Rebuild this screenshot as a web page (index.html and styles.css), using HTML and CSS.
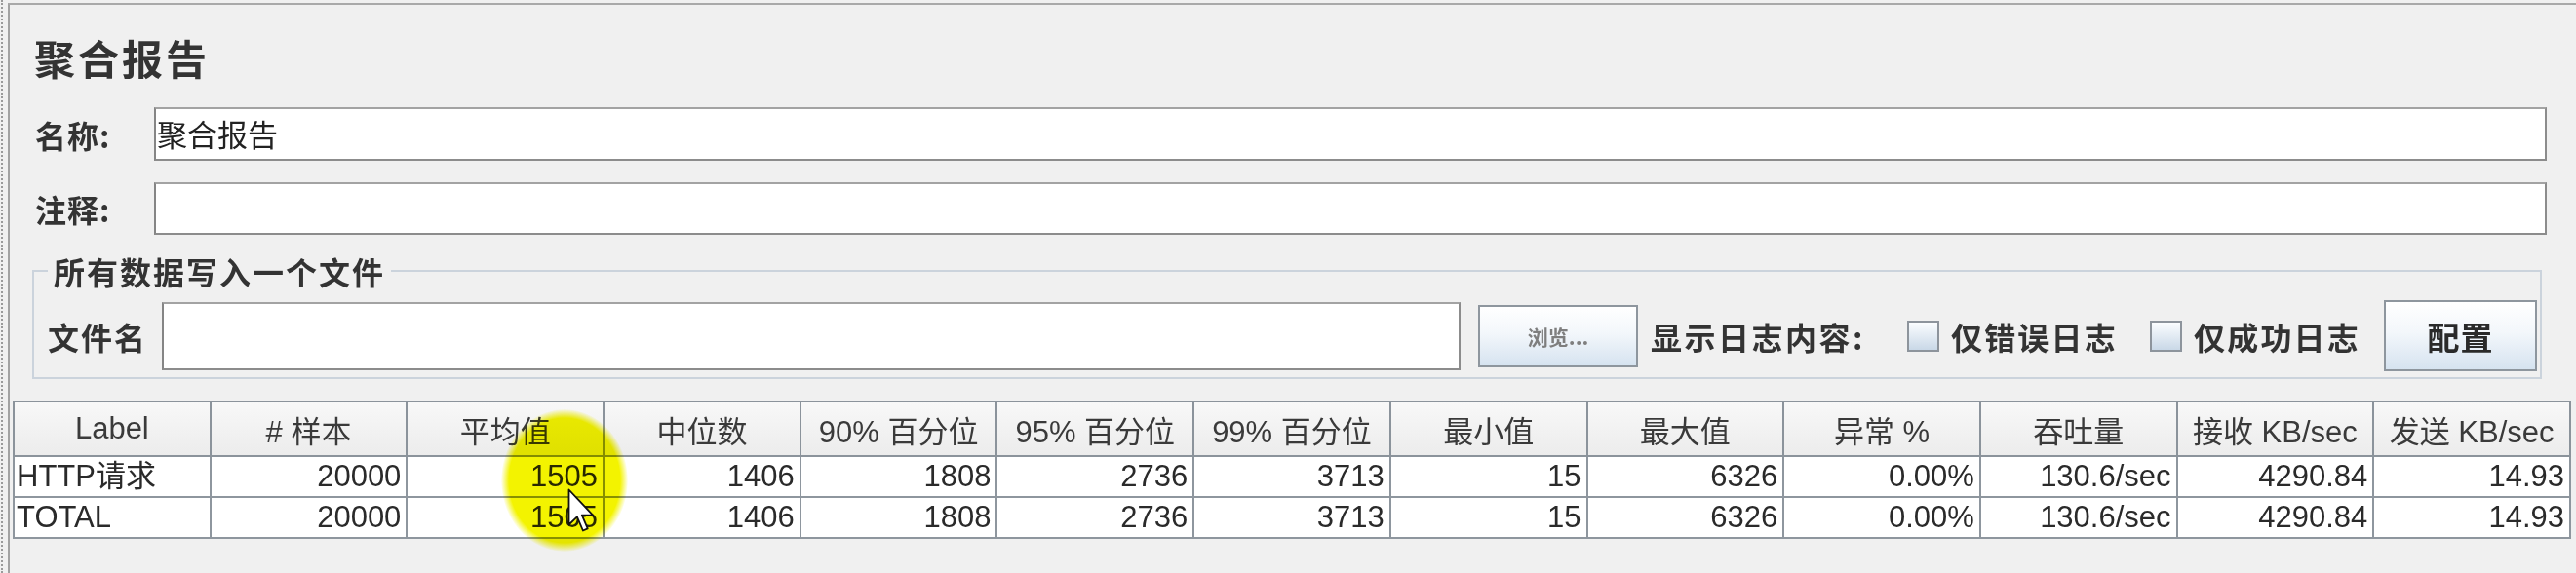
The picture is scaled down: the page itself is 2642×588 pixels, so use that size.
FILE: index.html
```html
<!DOCTYPE html>
<html lang="zh-CN">
<head>
<meta charset="utf-8">
<title>聚合报告</title>
<link rel="stylesheet" href="styles.css">
</head>
<body>
<div class="screen">
  <div class="edge"></div>
  <div class="panel">
    <div class="form">
      <h1 class="title">聚合报告</h1>
      <div class="field">
        <span class="lbl">名称:</span>
        <div class="input">聚合报告</div>
      </div>
      <div class="field field-comment">
        <span class="lbl">注释:</span>
        <div class="input"></div>
      </div>
      <fieldset class="group">
        <legend>所有数据写入一个文件</legend>
        <div class="file-row">
          <span class="file-lbl">文件名</span>
          <div class="input file-input"></div>
          <button class="btn browse">浏览...</button>
          <span class="log-lbl">显示日志内容:</span>
          <span class="check"></span>
          <span class="check-lbl">仅错误日志</span>
          <span class="check check-second"></span>
          <span class="check-lbl">仅成功日志</span>
          <button class="btn config">配置</button>
        </div>
      </fieldset>
    </div>
    <table class="report">
      <thead>
        <tr>
          <th>Label</th><th># 样本</th><th>平均值</th><th>中位数</th><th>90% 百分位</th><th>95% 百分位</th><th>99% 百分位</th><th>最小值</th><th>最大值</th><th>异常 %</th><th>吞吐量</th><th>接收 KB/sec</th><th>发送 KB/sec</th>
        </tr>
      </thead>
      <tbody>
        <tr>
          <td class="name">HTTP请求</td><td>20000</td><td>1505</td><td>1406</td><td>1808</td><td>2736</td><td>3713</td><td>15</td><td>6326</td><td>0.00%</td><td>130.6/sec</td><td>4290.84</td><td>14.93</td>
        </tr>
        <tr>
          <td class="name">TOTAL</td><td>20000</td><td>1505</td><td>1406</td><td>1808</td><td>2736</td><td>3713</td><td>15</td><td>6326</td><td>0.00%</td><td>130.6/sec</td><td>4290.84</td><td>14.93</td>
        </tr>
      </tbody>
    </table>
  </div>
  <div class="highlight"></div>
  <svg class="cursor" viewBox="0 0 20 32" width="30" height="48" aria-hidden="true">
    <path d="M1 1 L1 25 L6.6 19.6 L10.6 29 L13.8 27.6 L9.9 18.4 L17.4 18.4 Z" fill="#ffffff" stroke="#111111" stroke-width="1.2" stroke-linejoin="round"/>
  </svg>
</div>
</body>
</html>
```
FILE: styles.css
```css
* { box-sizing: border-box; }

html, body {
  margin: 0;
  padding: 0;
  background: #f0f0f0;
}

body {
  width: 2642px;
  height: 588px;
  overflow: hidden;
  font-family: "Noto Sans CJK SC", "Liberation Sans", sans-serif;
  color: #2e2e2e;
}

.screen {
  position: relative;
  display: flex;
  width: 2642px;
  height: 588px;
}

.edge {
  width: 7px;
  flex: none;
  border-left: 2px dotted #9a9a9a;
  margin-left: 1px;
}

.panel {
  flex: 1;
  margin-top: 3px;
  border-top: 2px solid #a9a9a9;
  border-left: 2px solid #a2a2a2;
  min-width: 0;
}

.form {
  padding: 0 30px 0 23px;
}

.title {
  margin: 29px 0 0 2px;
  font-size: 42px;
  line-height: 50px;
  font-weight: 700;
  letter-spacing: 3px;
  color: #333;
}

.field {
  display: flex;
  align-items: center;
  height: 55px;
  margin-top: 26px;
}

.field-comment {
  margin-top: 22px;
  height: 54px;
}

.lbl {
  width: 125px;
  flex: none;
  padding-left: 3px;
  font-size: 32px;
  font-weight: 700;
  letter-spacing: 1px;
  color: #333;
}

.input {
  flex: 1;
  align-self: stretch;
  background: #fff;
  border: 2px solid #a3a3a3;
  border-left-color: #858585;
  border-bottom-color: #8c8c8c;
  border-right-color: #8c8c8c;
  font-size: 31px;
  line-height: 50px;
  padding-left: 1px;
  color: #222;
}

.group {
  margin: 17px 5px 0 0;
  padding: 10px 3px 6px 14px;
  border: 2px solid #cbd3dc;
  min-width: 0;
}

.group legend {
  padding: 0 6px;
  margin-left: 0;
  font-size: 32px;
  line-height: 40px;
  font-weight: 700;
  letter-spacing: 2px;
  color: #333;
}

.file-row {
  display: flex;
  align-items: center;
  height: 73px;
}

.file-lbl {
  width: 117px;
  flex: none;
  font-size: 32px;
  font-weight: 700;
  letter-spacing: 2px;
  color: #333;
}

.file-input {
  align-self: center;
  height: 70px;
}

.btn {
  flex: none;
  font-family: "Noto Sans CJK SC", sans-serif;
  background: linear-gradient(#ffffff 0%, #f3f7fb 45%, #d6e3f0 100%);
  border: 2px solid #8e969e;
  border-radius: 0;
  padding: 0;
  cursor: default;
}

.browse {
  margin-left: 18px;
  width: 164px;
  height: 64px;
  font-size: 21px;
  color: #7e7e7e;
  font-weight: 700;
}

.log-lbl {
  margin-left: 13px;
  font-size: 32px;
  font-weight: 700;
  letter-spacing: 2.5px;
  color: #333;
}

.check {
  flex: none;
  width: 33px;
  height: 32px;
  margin-left: 43px;
  border: 2px solid #8d949c;
  background: linear-gradient(#fbfdff, #c9d8e7);
}

.check-second {
  margin-left: 33px;
}

.check-lbl {
  margin-left: 12px;
  font-size: 32px;
  font-weight: 700;
  letter-spacing: 2.2px;
  color: #333;
}

.config {
  margin-left: 24px;
  width: 157px;
  height: 73px;
  font-size: 33px;
  font-weight: 700;
  color: #2a2a2a;
  letter-spacing: 1px;
}

.report {
  margin: 22px 0 0 3px;
  width: 2624px;
  table-layout: fixed;
  border-collapse: collapse;
  font-family: "Liberation Sans", "Noto Sans CJK SC", sans-serif;
  font-size: 31px;
  color: #2a2a2a;
}

.report th {
  height: 56px;
  padding: 0 2px;
  font-weight: 400;
  text-align: center;
  color: #3a3a3a;
  background: linear-gradient(#f8f8f8, #ececec);
  border: 2px solid #8b939b;
  white-space: nowrap;
  overflow: hidden;
}

.report td {
  height: 42px;
  padding: 0 5px 0 2px;
  text-align: right;
  background: #ffffff;
  border: 2px solid #8e969e;
  white-space: nowrap;
  overflow: hidden;
  line-height: 36px;
}

.report td.name {
  text-align: left;
}

.highlight {
  position: absolute;
  left: 514px;
  top: 420px;
  width: 130px;
  height: 146px;
  border-radius: 50%;
  background: radial-gradient(ellipse at center, #f3f300 0%, #f3f300 62%, rgba(243, 243, 0, 0) 71%);
  mix-blend-mode: multiply;
  pointer-events: none;
}

.cursor {
  position: absolute;
  left: 582px;
  top: 501px;
}
```
